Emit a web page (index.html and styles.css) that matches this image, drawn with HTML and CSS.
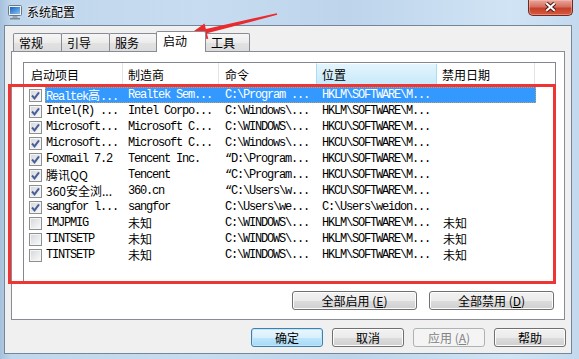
FILE: index.html
```html
<!DOCTYPE html>
<html lang="zh-CN">
<head>
  <meta charset="UTF-8" />
  <title>系统配置</title>
  <link rel="stylesheet" href="styles.css">
</head>
<body>

<div class="titlebar">
  <svg class="app-icon" viewBox="0 0 16 16">
    <defs>
      <linearGradient id="scr" x1="0" y1="0" x2="1" y2="1">
        <stop offset="0" stop-color="#1b5fbf"/>
        <stop offset="1" stop-color="#86c6f2"/>
      </linearGradient>
    </defs>
    <rect x="1.5" y="1.5" width="13" height="10" rx="1" fill="#eef2f6" stroke="#6b7a8a"/>
    <rect x="3" y="3" width="10" height="7" fill="url(#scr)"/>
    <path d="M6 12h4l1 2H5z" fill="#9aa5b1"/>
    <rect x="3" y="14" width="10" height="1.5" fill="#7d8894"/>
  </svg>
  <span class="title">系统配置</span>
  <div class="close">
    <svg viewBox="0 0 45 16">
      <path d="M18 3.5L27 11.5M27 3.5L18 11.5" stroke="#4b1a14" stroke-width="4.4" fill="none"/>
      <path d="M18 3.5L27 11.5M27 3.5L18 11.5" stroke="#fff" stroke-width="2.2" fill="none"/>
    </svg>
  </div>
</div>

<div class="client">
  <div class="tabs">
    <div class="tab t1">常规</div>
    <div class="tab t2">引导</div>
    <div class="tab t3">服务</div>
    <div class="tab t4 active">启动</div>
    <div class="tab t5">工具</div>
  </div>

  <div class="panel">
    <div class="listbox">
      <div class="head">
        <div class="hcell h1">启动项目</div>
        <div class="hcell h2">制造商</div>
        <div class="hcell h3">命令</div>
        <div class="hcell h4 sorted">位置</div>
        <div class="hcell h5">禁用日期</div>
      </div>

      <div class="rows">
        <div class="row">
          <span class="chk"><span class="box"><svg viewBox="0 0 11 11"><path d="M2 5.5L4.5 8.3L9 2.3"/></svg></span></span>
          <div class="item sel">
            <span class="n">Realtek<span class="zh">高</span>...</span><span class="m">Realtek Sem...</span><span class="cmd">C:\Program ...</span><span class="loc">HKLM\SOFTWARE\M...</span><span class="date"></span>
          </div>
        </div>
        <div class="row">
          <span class="chk"><span class="box"><svg viewBox="0 0 11 11"><path d="M2 5.5L4.5 8.3L9 2.3"/></svg></span></span>
          <div class="item">
            <span class="n">Intel(R) ...</span><span class="m">Intel Corpo...</span><span class="cmd">C:\Windows\...</span><span class="loc">HKLM\SOFTWARE\M...</span><span class="date"></span>
          </div>
        </div>
        <div class="row">
          <span class="chk"><span class="box"><svg viewBox="0 0 11 11"><path d="M2 5.5L4.5 8.3L9 2.3"/></svg></span></span>
          <div class="item">
            <span class="n">Microsoft...</span><span class="m">Microsoft C...</span><span class="cmd">C:\WINDOWS\...</span><span class="loc">HKCU\SOFTWARE\M...</span><span class="date"></span>
          </div>
        </div>
        <div class="row">
          <span class="chk"><span class="box"><svg viewBox="0 0 11 11"><path d="M2 5.5L4.5 8.3L9 2.3"/></svg></span></span>
          <div class="item">
            <span class="n">Microsoft...</span><span class="m">Microsoft C...</span><span class="cmd">C:\Windows\...</span><span class="loc">HKCU\SOFTWARE\M...</span><span class="date"></span>
          </div>
        </div>
        <div class="row">
          <span class="chk"><span class="box"><svg viewBox="0 0 11 11"><path d="M2 5.5L4.5 8.3L9 2.3"/></svg></span></span>
          <div class="item">
            <span class="n">Foxmail 7.2</span><span class="m">Tencent Inc.</span><span class="cmd">“D:\Program...</span><span class="loc">HKCU\SOFTWARE\M...</span><span class="date"></span>
          </div>
        </div>
        <div class="row">
          <span class="chk"><span class="box"><svg viewBox="0 0 11 11"><path d="M2 5.5L4.5 8.3L9 2.3"/></svg></span></span>
          <div class="item">
            <span class="n zh">腾讯QQ</span><span class="m">Tencent</span><span class="cmd">“C:\Program...</span><span class="loc">HKCU\SOFTWARE\M...</span><span class="date"></span>
          </div>
        </div>
        <div class="row">
          <span class="chk"><span class="box"><svg viewBox="0 0 11 11"><path d="M2 5.5L4.5 8.3L9 2.3"/></svg></span></span>
          <div class="item">
            <span class="n zh">360安全浏...</span><span class="m">360.cn</span><span class="cmd">“C:\Users\w...</span><span class="loc">HKCU\SOFTWARE\M...</span><span class="date"></span>
          </div>
        </div>
        <div class="row">
          <span class="chk"><span class="box"><svg viewBox="0 0 11 11"><path d="M2 5.5L4.5 8.3L9 2.3"/></svg></span></span>
          <div class="item">
            <span class="n">sangfor l...</span><span class="m">sangfor</span><span class="cmd">C:\Users\we...</span><span class="loc">C:\Users\weidon...</span><span class="date"></span>
          </div>
        </div>
        <div class="row">
          <span class="chk"><span class="box"></span></span>
          <div class="item">
            <span class="n">IMJPMIG</span><span class="m zh">未知</span><span class="cmd">C:\WINDOWS\...</span><span class="loc">HKLM\SOFTWARE\M...</span><span class="date zh">未知</span>
          </div>
        </div>
        <div class="row">
          <span class="chk"><span class="box"></span></span>
          <div class="item">
            <span class="n">TINTSETP</span><span class="m zh">未知</span><span class="cmd">C:\WINDOWS\...</span><span class="loc">HKLM\SOFTWARE\M...</span><span class="date zh">未知</span>
          </div>
        </div>
        <div class="row">
          <span class="chk"><span class="box"></span></span>
          <div class="item">
            <span class="n">TINTSETP</span><span class="m zh">未知</span><span class="cmd">C:\WINDOWS\...</span><span class="loc">HKLM\SOFTWARE\M...</span><span class="date zh">未知</span>
          </div>
        </div>
      </div>
    </div>

    <div class="panel-buttons">
      <button class="btn wide">全部启用 (<u>E</u>)</button>
      <button class="btn wide">全部禁用 (<u>D</u>)</button>
    </div>
  </div>

  <div class="dlg-buttons">
    <button class="btn std default">确定</button>
    <button class="btn std">取消</button>
    <button class="btn std" disabled>应用 (<u>A</u>)</button>
    <button class="btn std">帮助</button>
  </div>
</div>

<!-- annotation -->
<div class="mark-box"></div>
<svg class="mark-arrow" viewBox="0 0 579 359">
  <polygon points="187,36 208.3,39 206.9,33.3 277.2,14.8 276.8,13.2 205.9,29.1 204.5,23.4" fill="#ea2a2e"/>
</svg>

</body>
</html>
```

FILE: styles.css
```css
* {
  box-sizing: border-box;
}
body {
  margin: 0;
  width: 579px;
  height: 359px;
  overflow: hidden;
  position: relative;
  background: linear-gradient(90deg, #a7c1dc 0, #c0d6ec 2%, #c7dcf0 35%, #bdd4eb 60%, #d1e4f5 88%, #c4d9ee 100%);
  font-family: "Noto Sans CJK SC", "Microsoft YaHei", sans-serif;
  font-size: 12px;
  color: #000;
}

/* title bar */
.titlebar {
  height: 25px;
  display: flex;
  align-items: flex-start;
  padding-left: 7px;
}
.app-icon {
  width: 16px;
  height: 16px;
  margin-top: 4px;
}
.title {
  margin-left: 4px;
  margin-top: 4px;
  line-height: 16px;
  text-shadow: 0 0 5px #fff, 0 0 3px #fff;
}
.close {
  margin-left: auto;
  margin-right: 6px;
  width: 45px;
  height: 16px;
  border: 1px solid #6d2a22;
  border-top: none;
  border-radius: 0 0 5px 5px;
  background: linear-gradient(#e8a69c, #d66f60 45%, #c4412c 55%, #d8583c 100%);
  box-shadow: inset 0 0 0 1px rgba(255, 200, 190, 0.45);
}
.close svg {
  display: block;
  width: 43px;
  height: 15px;
}

/* dialog body */
.client {
  margin-left: 4px;
  width: 568px;
  border: 1px solid #74869a;
  background: #f0f0f0;
  padding: 5px 6px 6px;
}

.tabs {
  display: flex;
  align-items: flex-end;
  height: 20px;
  padding-left: 2px;
}
.tab {
  height: 18px;
  border: 1px solid #898c95;
  border-bottom: none;
  border-radius: 2px 2px 0 0;
  background: linear-gradient(#f6f6f6, #ececec 50%, #e2e2e2 51%, #dcdcdc);
  padding-left: 5px;
  line-height: 17px;
  margin-left: -1px;
}
.t1 { width: 49px; margin-left: 0; }
.t2 { width: 49px; }
.t3 { width: 48px; }
.t4 { width: 50px; }
.t5 { width: 45px; }
.tab.active {
  height: 21px;
  margin-bottom: -1px;
  background: #fff;
  padding-left: 6px;
  line-height: 18px;
  position: relative;
  z-index: 1;
}

.panel {
  background: #fff;
  border: 1px solid #898c95;
  padding: 10px 8px 9px 11px;
}

/* list view */
.listbox {
  height: 221px;
  border: 1px solid #828790;
  background: #fff;
}
.head {
  display: flex;
  height: 23px;
}
.hcell {
  border-right: 1px solid #e3e4e6;
  line-height: 23px;
  white-space: nowrap;
}
.h1 { width: 99px; padding-left: 7px; }
.h2 { width: 96px; padding-left: 5px; }
.h3 { width: 98px; padding-left: 6px; }
.h4 { width: 121px; padding-left: 5px; }
.h5 { width: 98px; padding-left: 5px; }
.hcell.sorted {
  background: linear-gradient(#e4f5fd, #c6e9fa);
  border-left: 1px solid #a9dcf5;
  margin-left: -1px;
  border-right-color: #a9dcf5;
  margin-top: 1px;
  margin-bottom: 1px;
  line-height: 21px;
}

.rows {
  padding-top: 1px;
}
.row {
  display: flex;
  height: 16px;
}
.chk {
  width: 21px;
  padding: 2px 0 0 5px;
}
.box {
  display: block;
  width: 13px;
  height: 13px;
  border: 1px solid #8e8f8f;
  background: linear-gradient(135deg, #d3d6db, #fbfbfb);
  box-shadow: inset 0 0 0 1px #f5f5f5;
}
.box svg {
  display: block;
  width: 11px;
  height: 11px;
}
.box path {
  fill: none;
  stroke: #4a5f97;
  stroke-width: 2;
}
.item {
  display: flex;
  height: 16px;
  font-family: "Liberation Mono", "Noto Sans CJK SC", monospace;
  font-size: 12px;
  letter-spacing: -1.2px;
  line-height: 16px;
}
.item > span {
  overflow: hidden;
  white-space: nowrap;
}
.n { width: 78px; padding-left: 1px; }
.m { width: 96px; padding-left: 5px; }
.cmd { width: 98px; padding-left: 6px; }
.loc { width: 121px; padding-left: 5px; }
.date { width: 98px; padding-left: 5px; }
.zh {
  font-family: "Noto Sans CJK SC", sans-serif;
  letter-spacing: 0;
}
.item.sel {
  background: #3399ff;
  color: #fff;
  outline: 1px dotted #c0a070;
  outline-offset: -1px;
}

/* buttons */
.btn {
  font-family: "Noto Sans CJK SC", sans-serif;
  font-size: 12px;
  height: 19px;
  padding: 0;
  line-height: 16px;
  color: #000;
  border: 1px solid #707070;
  border-radius: 3px;
  background: linear-gradient(#f2f2f2, #ebebeb 50%, #dddddd 51%, #cfcfcf);
  box-shadow: inset 0 0 0 1px #fcfcfc;
}
.btn u {
  text-decoration: underline;
}
.btn.wide { width: 125px; }
.btn.std { width: 72px; }
.btn.default {
  border-color: #3c7fb1;
  background: linear-gradient(#eaf6fd, #d9f0fc 50%, #bee6fd 51%, #a7d9f5);
  box-shadow: inset 0 0 0 1px #c4e5f6;
}
.btn:disabled {
  border-color: #adb2b5;
  background: #f4f4f4;
  color: #838383;
  box-shadow: none;
}
.panel-buttons {
  display: flex;
  justify-content: flex-end;
  gap: 12px;
  margin-top: 8px;
  padding-right: 2px;
}
.dlg-buttons {
  display: flex;
  justify-content: flex-end;
  gap: 9px;
  margin-top: 8px;
  margin-right: -1px;
}

/* red annotation */
.mark-box {
  position: absolute;
  left: 8px;
  top: 84px;
  width: 548px;
  height: 200px;
  border: 3px solid #ef3434;
}
.mark-arrow {
  position: absolute;
  left: 0;
  top: 0;
  width: 579px;
  height: 359px;
  pointer-events: none;
}
```
